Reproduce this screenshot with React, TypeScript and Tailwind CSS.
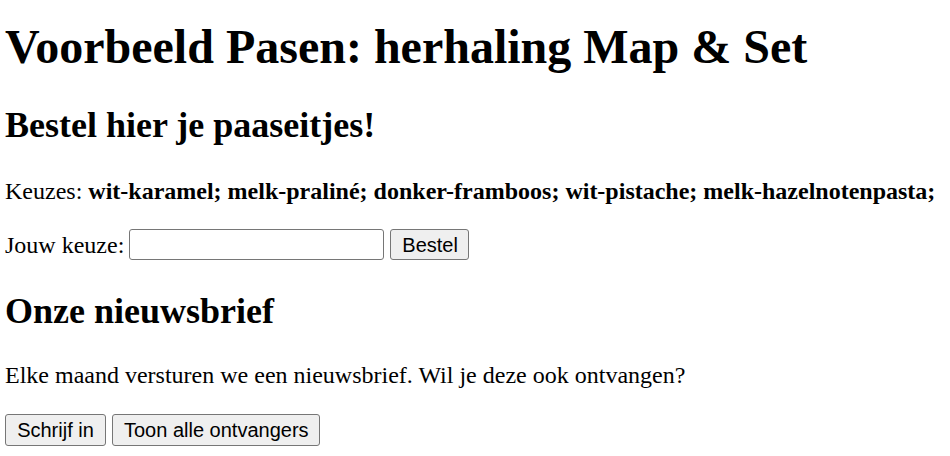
import { useState } from "react";

const choices = [
  "wit-karamel",
  "melk-praliné",
  "donker-framboos",
  "wit-pistache",
  "melk-hazelnotenpasta",
];

const btn =
  "h-[31px] px-[11px] rounded-[3px] border border-[#767676] bg-[#efefef] text-[20px] leading-none text-black whitespace-nowrap font-['Liberation_Sans',Arial,sans-serif]";

export default function App() {
  const [keuze, setKeuze] = useState("");

  return (
    <div className="min-h-screen bg-white text-black pl-[5px] pt-[19px] font-['Liberation_Serif','Times_New_Roman',serif]">
      {/* Title */}
      <h1 className="text-[48px] leading-[55px] font-bold whitespace-nowrap">
        Voorbeeld Pasen: herhaling Map &amp; Set
      </h1>

      {/* Bestellen */}
      <h2 className="mt-[31px] text-[36px] leading-[41px] font-bold">
        Bestel hier je paaseitjes!
      </h2>
      <p className="mt-[31px] text-[24px] leading-[28px] whitespace-nowrap">
        Keuzes:{" "}
        <b>
          {choices.map((c) => (
            <span key={c}>{c}; </span>
          ))}
        </b>
      </p>
      <div className="mt-[24px] flex items-center h-[31px] text-[24px] leading-[28px]">
        <span>Jouw keuze:</span>
        <input
          value={keuze}
          onChange={(e) => setKeuze(e.target.value)}
          className="ml-[5px] w-[255px] h-[31px] rounded-[3px] border border-[#767676] bg-white px-1 text-[20px]"
        />
        <button className={`${btn} ml-[6px] w-[79px]`}>Bestel</button>
      </div>

      {/* Nieuwsbrief */}
      <h2 className="mt-[31px] text-[36px] leading-[41px] font-bold">Onze nieuwsbrief</h2>
      <p className="mt-[29px] text-[24px] leading-[28px]">
        Elke maand versturen we een nieuwsbrief. Wil je deze ook ontvangen?
      </p>
      <div className="mt-[25px] flex gap-[6px]">
        <button className={`${btn} w-[101px] h-[32px]`}>Schrijf in</button>
        <button className={`${btn} w-[208px] h-[32px]`}>Toon alle ontvangers</button>
      </div>
    </div>
  );
}
